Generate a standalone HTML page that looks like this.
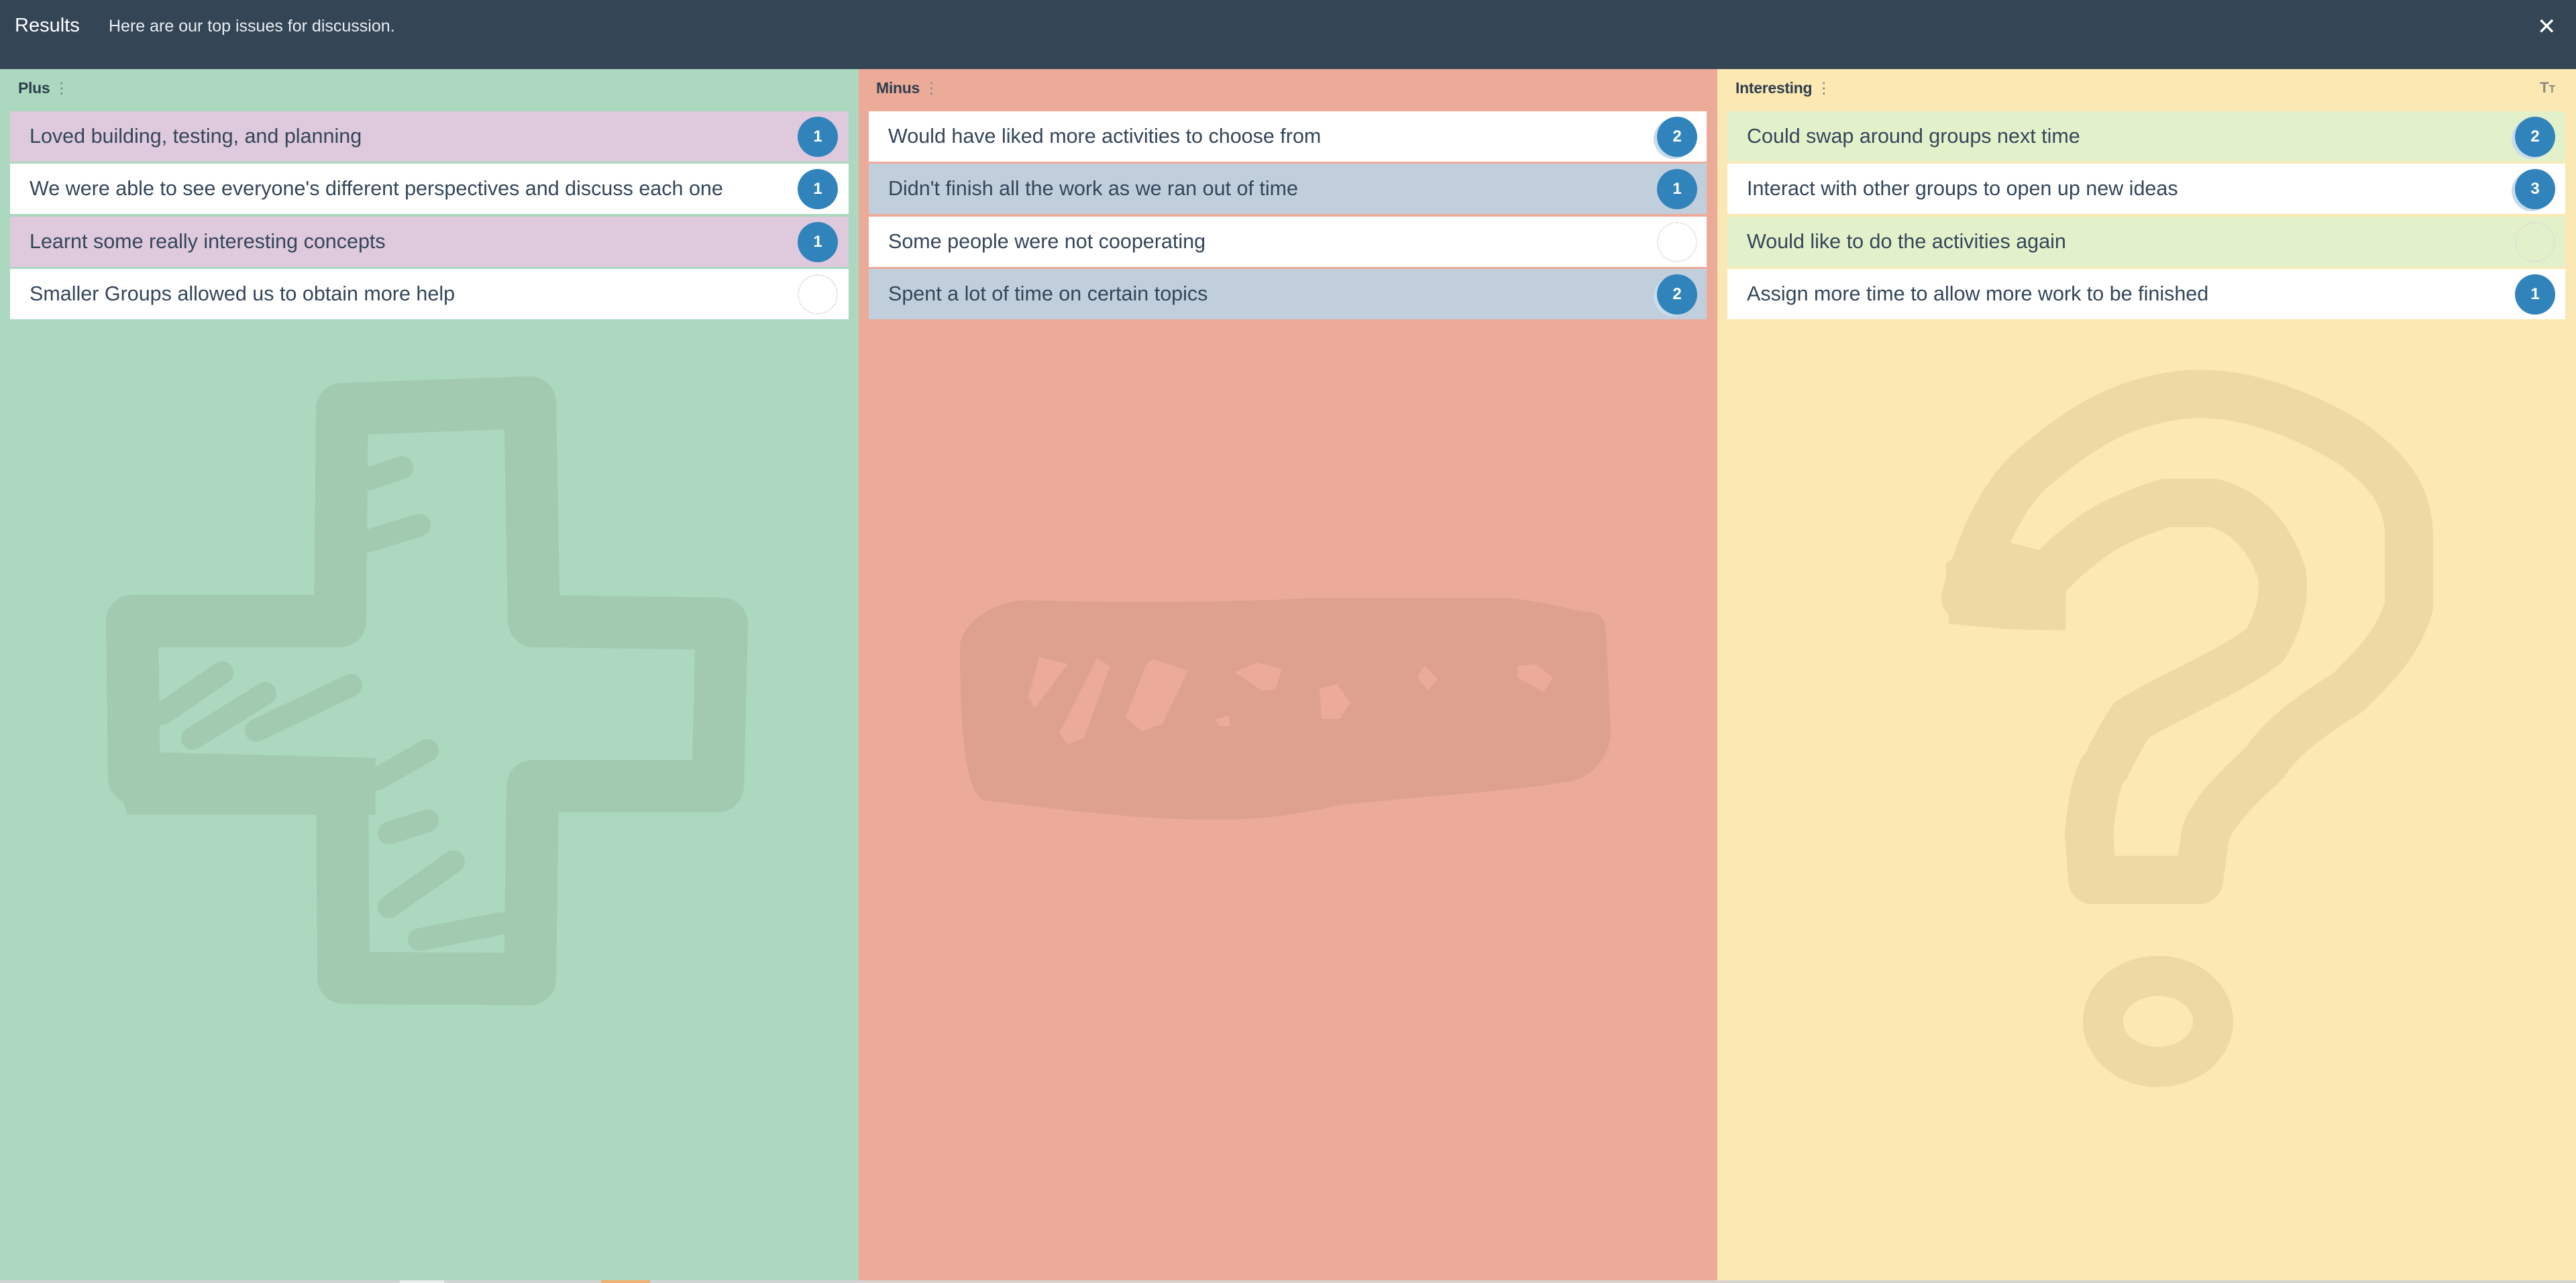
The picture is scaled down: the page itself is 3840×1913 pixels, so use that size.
<!DOCTYPE html>
<html><head><meta charset="utf-8"><style>
*{margin:0;padding:0;box-sizing:border-box}
body{width:3840px;height:1913px;overflow:hidden;position:relative;font-family:"Liberation Sans",sans-serif;background:#acd8bf}
.hdr{position:absolute;left:0;top:0;width:3840px;height:103px;background:#344556;color:#fff}
.col{position:absolute;top:103px;height:1806px;width:1280px}
.ttl{position:absolute;top:118px;font-size:23px;color:#2f3e4e;font-weight:bold;letter-spacing:-0.3px}
.ttl span{color:#7a8a8a;font-weight:normal;margin-left:6px}
.card{position:absolute;height:75px;font-size:30.5px;color:#34465a;line-height:75px;padding-left:29px;white-space:nowrap}
.b{position:absolute;width:60px;height:60px;border-radius:50%;background:#3183bb;color:#fff;font-weight:bold;font-size:24px;text-align:center;line-height:60px;top:8px}
.e{background:transparent;border:2px dotted #d8d8d8}
.h{box-shadow:-5px 3px 0 #c8dcea}
</style></head><body>
<div class="hdr">
<div style="position:absolute;left:22px;top:22px;font-size:29px">Results</div>
<div style="position:absolute;left:162px;top:25px;font-size:25px;color:#e8eef2">Here are our top issues for discussion.</div>
<div style="position:absolute;left:3782px;top:20px;font-size:34px">✕</div>
</div>
<div class="col" style="left:0;background:#acd8bf"></div>
<div class="col" style="left:1280px;background:#ecab99"></div>
<div class="col" style="left:2560px;background:#fce8b2"></div>
<svg style="position:absolute;left:0;top:0" width="3840" height="1913">
<g fill="none" stroke="#a1cab1" stroke-width="78" stroke-linejoin="round">
<path d="M510 610 L790 600 L796 926 L1076 930 L1070 1172 L794 1172 L790 1460 L512 1458 L510 1168 L200 1160 L197 926 L507 926 Z"/>
</g>
<path fill="#a1cab1" d="M160 1120 L560 1130 L560 1215 L190 1215Z"/>
<g stroke="#a1cab1" stroke-width="34" stroke-linecap="round">
<line x1="242" y1="1064" x2="331" y2="1003"/><line x1="287" y1="1101" x2="395" y2="1034"/><line x1="382" y1="1089" x2="523" y2="1022"/><line x1="561" y1="1162" x2="637" y2="1119"/><line x1="580" y1="1242" x2="637" y2="1224"/><line x1="580" y1="1352" x2="676" y2="1285"/><line x1="625" y1="1401" x2="746" y2="1377"/><line x1="548" y1="807" x2="625" y2="783"/><line x1="548" y1="715" x2="599" y2="697"/>
</g>
<path fill="#dea18f" d="M1533 895 C1600 897 1800 900 1950 892 L2255 892 C2320 900 2340 910 2370 913 C2392 915 2395 930 2395 960 L2401 1093 C2400 1130 2370 1160 2342 1165 C2250 1180 2150 1185 2000 1200 C1900 1222 1850 1222 1811 1222 C1700 1222 1600 1210 1466 1193 C1440 1180 1431 1100 1431 960 C1440 920 1490 895 1533 895Z"/>
<g fill="#ecab99">
<path d="M1549 980 L1592 990 L1543 1055 L1533 1040Z"/>
<path d="M1635 982 L1655 993 L1616 1100 L1592 1110 L1579 1093Z"/>
<path d="M1718 983 L1771 1000 L1732 1080 L1702 1090 L1678 1070 L1708 993Z"/>
<path d="M1874 988 L1911 997 L1901 1028 L1881 1030 L1841 1002Z"/>
<path d="M1993 1020 L2013 1048 L1997 1072 L1970 1072 L1967 1027Z"/>
<path d="M2123 992 L2143 1013 L2129 1029 L2113 1010Z"/>
<path d="M2289 990 L2315 1010 L2302 1032 L2262 1010 L2262 993Z"/>
<path d="M1811 1073 L1831 1067 L1834 1082 L1818 1083Z"/>
</g>
<g fill="none" stroke="#eed9a4" stroke-width="72" stroke-linejoin="round" stroke-linecap="round">
<path d="M2930 891 C2960 780 3000 720 3040 690 C3100 640 3160 600 3250 589 C3330 580 3420 610 3502 659 C3560 700 3591 740 3591 800 L3591 905 C3570 970 3530 1000 3502 1031 C3440 1070 3400 1100 3377 1136 C3330 1180 3300 1210 3288 1242 L3278 1312 L3119 1312 L3114 1242 C3120 1180 3130 1150 3139 1143 C3160 1100 3170 1085 3178 1073 C3250 1030 3330 1000 3377 961 C3400 920 3405 890 3402 856 C3380 790 3340 760 3300 750 L3228 750 C3180 765 3150 780 3129 793 C3090 820 3070 840 3054 856"/>
<ellipse cx="3217" cy="1523" rx="82" ry="68" stroke-width="60"/>
</g>
<path fill="#eed9a4" d="M2900 840 L2960 800 L3080 830 L3079 940 L2990 938 L2905 930Z"/>
<rect x="0" y="1909" width="3840" height="4" fill="#d4d4d4"/>
<rect x="596" y="1909" width="66" height="4" fill="#eeeeee"/>
<rect x="896" y="1909" width="73" height="4" fill="#f3ad6c"/>
</svg>
<div class="ttl" style="left:27px">Plus<span>⋮</span></div>
<div class="ttl" style="left:1306px">Minus<span>⋮</span></div>
<div class="ttl" style="left:2587px">Interesting<span>⋮</span></div>
<div style="position:absolute;left:3786px;top:118px;font-size:22px;color:#8a8a80;font-weight:bold">T<span style="font-size:16px">T</span></div>

<div class="card" style="left:15px;top:166px;width:1250px;background:#dfc9dc">Loved building, testing, and planning<div class="b" style="left:1174px">1</div></div>
<div class="card" style="left:15px;top:244px;width:1250px;background:#fff">We were able to see everyone's different perspectives and discuss each one<div class="b" style="left:1174px">1</div></div>
<div class="card" style="left:15px;top:323px;width:1250px;background:#dfc9dc">Learnt some really interesting concepts<div class="b" style="left:1174px">1</div></div>
<div class="card" style="left:15px;top:401px;width:1250px;background:#fff">Smaller Groups allowed us to obtain more help<div class="b e" style="left:1174px"></div></div>

<div class="card" style="left:1295px;top:166px;width:1249px;background:#fff">Would have liked more activities to choose from<div class="b h" style="left:1175px">2</div></div>
<div class="card" style="left:1295px;top:244px;width:1249px;background:#c1cfdc">Didn't finish all the work as we ran out of time<div class="b" style="left:1175px">1</div></div>
<div class="card" style="left:1295px;top:323px;width:1249px;background:#fff">Some people were not cooperating<div class="b e" style="left:1175px"></div></div>
<div class="card" style="left:1295px;top:401px;width:1249px;background:#c1cfdc">Spent a lot of time on certain topics<div class="b h" style="left:1175px">2</div></div>

<div class="card" style="left:2575px;top:166px;width:1249px;background:#e3f1cb">Could swap around groups next time<div class="b h" style="left:1174px">2</div></div>
<div class="card" style="left:2575px;top:244px;width:1249px;background:#fff">Interact with other groups to open up new ideas<div class="b h" style="left:1174px">3</div></div>
<div class="card" style="left:2575px;top:323px;width:1249px;background:#e3f1cb">Would like to do the activities again<div class="b e" style="left:1174px"></div></div>
<div class="card" style="left:2575px;top:401px;width:1249px;background:#fff">Assign more time to allow more work to be finished<div class="b" style="left:1174px">1</div></div>
</body></html>
